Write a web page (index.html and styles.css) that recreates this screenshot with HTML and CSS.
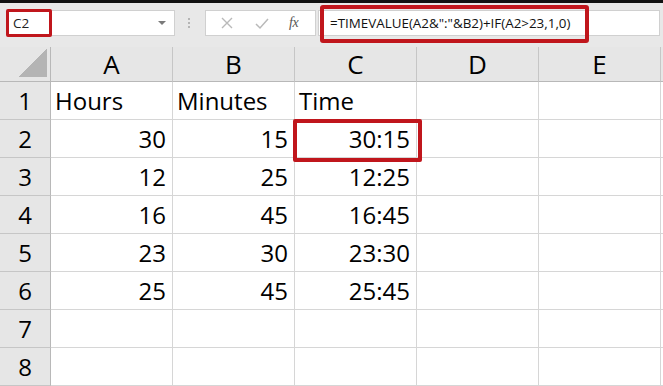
FILE: index.html
```html
<!DOCTYPE html>
<html>
<head>
<meta charset="utf-8">
<link rel="stylesheet" href="styles.css">
</head>
<body>
<div class="app">
  <div class="topbar"></div>
  <div class="fbar">
    <div class="namebox">
      <span class="name">C2</span>
      <span class="dd"></span>
      <span class="mark name-mark"></span>
    </div>
    <div class="grip"><i></i><i></i><i></i></div>
    <div class="btns">
      <svg class="ico" width="14" height="14" viewBox="0 0 14 14"><path d="M2 2 L12 12 M12 2 L2 12" stroke="#b9b9b9" stroke-width="1.4" fill="none"/></svg>
      <svg class="ico" width="16" height="14" viewBox="0 0 16 14"><path d="M2 8 L6 12 L14 3" stroke="#b9b9b9" stroke-width="1.5" fill="none"/></svg>
      <span class="fx">fx</span>
    </div>
    <div class="formula">
      <span class="ftext">=TIMEVALUE(A2&amp;":"&amp;B2)+IF(A2&gt;23,1,0)</span>
      <span class="mark formula-mark"></span>
    </div>
  </div>
  <div class="sheet">
    <div class="corner"><span class="tri"></span></div>
    <div class="ch">A</div><div class="ch">B</div><div class="ch">C</div><div class="ch">D</div><div class="ch">E</div><div class="ch"></div>

    <div class="rh">1</div><div class="c">Hours</div><div class="c">Minutes</div><div class="c">Time</div><div class="c"></div><div class="c"></div><div class="c"></div>
    <div class="rh">2</div><div class="c n">30</div><div class="c n">15</div><div class="c n sel">30:15<span class="mark cell-mark"></span></div><div class="c"></div><div class="c"></div><div class="c"></div>
    <div class="rh">3</div><div class="c n">12</div><div class="c n">25</div><div class="c n">12:25</div><div class="c"></div><div class="c"></div><div class="c"></div>
    <div class="rh">4</div><div class="c n">16</div><div class="c n">45</div><div class="c n">16:45</div><div class="c"></div><div class="c"></div><div class="c"></div>
    <div class="rh">5</div><div class="c n">23</div><div class="c n">30</div><div class="c n">23:30</div><div class="c"></div><div class="c"></div><div class="c"></div>
    <div class="rh">6</div><div class="c n">25</div><div class="c n">45</div><div class="c n">25:45</div><div class="c"></div><div class="c"></div><div class="c"></div>
    <div class="rh">7</div><div class="c"></div><div class="c"></div><div class="c"></div><div class="c"></div><div class="c"></div><div class="c"></div>
    <div class="rh">8</div><div class="c"></div><div class="c"></div><div class="c"></div><div class="c"></div><div class="c"></div><div class="c"></div>
  </div>
</div>
</body>
</html>
```
FILE: styles.css
```css
* { box-sizing: border-box; }
html, body { margin: 0; padding: 0; background: #ffffff; }
.app {
  width: 663px;
  height: 386px;
  overflow: hidden;
  font-family: "Open Sans", "Noto Sans", sans-serif;
  color: #000;
}
.topbar { height: 3px; background: #111; }
.fbar {
  height: 44px;
  background: #e8e8e8;
  display: flex;
  align-items: flex-start;
  padding-top: 7px;
}
.namebox {
  position: relative;
  margin-left: 8px;
  width: 167px;
  height: 26px;
  background: #fff;
  border: 1px solid #d0d0d0;
  display: flex;
  align-items: center;
}
.name { font-size: 13.5px; padding-left: 4px; line-height: 24px; color: #222; }
.dd {
  margin-left: auto;
  margin-right: 8px;
  width: 0; height: 0;
  border-left: 4px solid transparent;
  border-right: 4px solid transparent;
  border-top: 4px solid #7a7a7a;
}
.mark { position: absolute; border-style: solid; border-color: #c0161c; pointer-events: none; }
.name-mark { left: -3px; top: -2px; width: 46px; height: 28px; border-width: 3px; border-radius: 2px; }
.grip {
  margin-left: 12px;
  width: 4px;
  height: 26px;
  display: flex;
  flex-direction: column;
  justify-content: center;
  align-items: center;
  gap: 2px;
}
.grip i { display: block; width: 2px; height: 2px; background: #b5b5b5; }
.btns {
  margin-left: 14px;
  width: 111px;
  height: 26px;
  background: #fff;
  border: 1px solid #d0d0d0;
  display: flex;
  align-items: center;
  padding-left: 14px;
}
.btns .ico { display: block; }
.btns .ico + .ico { margin-left: 20px; }
.fx {
  margin-left: 19px;
  font-family: "Liberation Serif", serif;
  font-style: italic;
  font-size: 14px;
  color: #555;
  letter-spacing: -0.5px;
}
.formula {
  position: relative;
  margin-left: 2px;
  margin-right: 3px;
  flex: 1;
  height: 26px;
  background: #fff;
  border: 1px solid #d0d0d0;
  padding-left: 11px;
  display: flex;
  align-items: center;
}
.ftext { font-size: 13.4px; line-height: 24px; color: #111; white-space: nowrap; }
.formula-mark { left: 1px; top: -6px; width: 269px; height: 38px; border-width: 4px; border-radius: 3px; }

.sheet {
  display: grid;
  grid-template-columns: 51px repeat(5, 122px) 1fr;
  grid-template-rows: 35px repeat(8, 38px);
}
.corner {
  background: #e6e6e6;
  border-right: 1px solid #b8b8b8;
  border-bottom: 1px solid #b8b8b8;
  position: relative;
  display: flex;
  align-items: flex-end;
  justify-content: flex-end;
  padding: 0 3px 4px 0;
}
.tri {
  width: 29px; height: 28px;
  background: linear-gradient(to bottom right, transparent 50%, #b4b4b4 50%);
}
.ch {
  background: #e6e6e6;
  border-right: 1px solid #c6c6c6;
  border-bottom: 1px solid #b8b8b8;
  font-size: 26px;
  line-height: 34px;
  text-align: center;
}
.rh {
  background: #e6e6e6;
  border-right: 1px solid #b8b8b8;
  border-bottom: 1px solid #c6c6c6;
  font-size: 24px;
  line-height: 37px;
  text-align: center;
}
.c {
  border-right: 1px solid #d6d6d6;
  border-bottom: 1px solid #d6d6d6;
  font-size: 24px;
  line-height: 37px;
  padding: 0 6px 0 4px;
  white-space: nowrap;
}
.c.n { text-align: right; }
.sel { position: relative; }
.cell-mark { left: -2px; top: -1px; right: -6px; bottom: -5px; border-width: 4px; border-radius: 2px; }
```
